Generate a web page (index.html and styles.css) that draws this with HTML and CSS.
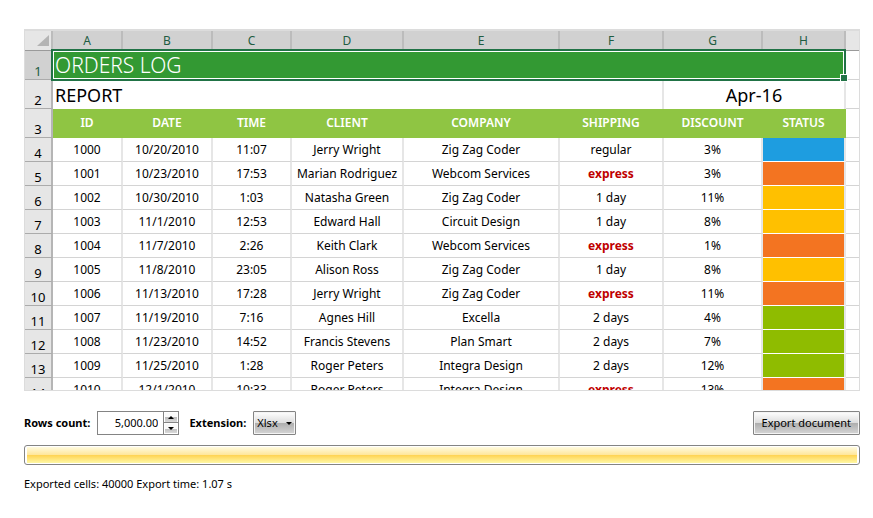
FILE: index.html
```html
<!DOCTYPE html>
<html lang="en">
<head>
<meta charset="utf-8">
<title>Orders log export</title>
<link rel="stylesheet" href="styles.css">
</head>
<body>
<main class="page">
  <div class="sheet">
    <table class="grid">
      <colgroup>
        <col class="w-num"><col class="w-a"><col class="w-b"><col class="w-c"><col class="w-d"><col class="w-e"><col class="w-f"><col class="w-g"><col class="w-h"><col class="w-i">
      </colgroup>
      <thead>
        <tr class="letters">
          <th class="corner"><svg width="12" height="11" viewBox="0 0 12 11" aria-hidden="true"><path d="M12 0V11H0Z" fill="#b4b4b4"/></svg></th>
          <th>A</th><th>B</th><th>C</th><th>D</th><th>E</th><th>F</th><th>G</th><th>H</th><th class="rest"></th>
        </tr>
      </thead>
      <tbody>
        <tr class="tall"><th class="num active">1</th><td class="title" colspan="8"><div class="selection">ORDERS LOG</div></td><td></td></tr>
        <tr class="tall"><th class="num">2</th><td class="report" colspan="6">REPORT</td><td class="month" colspan="2">Apr-16</td><td></td></tr>
        <tr class="tall names"><th class="num">3</th><td>ID</td><td>DATE</td><td>TIME</td><td>CLIENT</td><td>COMPANY</td><td>SHIPPING</td><td>DISCOUNT</td><td>STATUS</td><td class="rest"></td></tr>
        <tr><th class="num">4</th><td>1000</td><td>10/20/2010</td><td>11:07</td><td>Jerry Wright</td><td>Zig Zag Coder</td><td>regular</td><td>3%</td><td class="status blue"></td><td></td></tr>
        <tr><th class="num">5</th><td>1001</td><td>10/23/2010</td><td>17:53</td><td>Marian Rodriguez</td><td>Webcom Services</td><td class="express">express</td><td>3%</td><td class="status orange"></td><td></td></tr>
        <tr><th class="num">6</th><td>1002</td><td>10/30/2010</td><td>1:03</td><td>Natasha Green</td><td>Zig Zag Coder</td><td>1 day</td><td>11%</td><td class="status yellow"></td><td></td></tr>
        <tr><th class="num">7</th><td>1003</td><td>11/1/2010</td><td>12:53</td><td>Edward Hall</td><td>Circuit Design</td><td>1 day</td><td>8%</td><td class="status yellow"></td><td></td></tr>
        <tr><th class="num">8</th><td>1004</td><td>11/7/2010</td><td>2:26</td><td>Keith Clark</td><td>Webcom Services</td><td class="express">express</td><td>1%</td><td class="status orange"></td><td></td></tr>
        <tr><th class="num">9</th><td>1005</td><td>11/8/2010</td><td>23:05</td><td>Alison Ross</td><td>Zig Zag Coder</td><td>1 day</td><td>8%</td><td class="status yellow"></td><td></td></tr>
        <tr><th class="num">10</th><td>1006</td><td>11/13/2010</td><td>17:28</td><td>Jerry Wright</td><td>Zig Zag Coder</td><td class="express">express</td><td>11%</td><td class="status orange"></td><td></td></tr>
        <tr><th class="num">11</th><td>1007</td><td>11/19/2010</td><td>7:16</td><td>Agnes Hill</td><td>Excella</td><td>2 days</td><td>4%</td><td class="status green"></td><td></td></tr>
        <tr><th class="num">12</th><td>1008</td><td>11/23/2010</td><td>14:52</td><td>Francis Stevens</td><td>Plan Smart</td><td>2 days</td><td>7%</td><td class="status green"></td><td></td></tr>
        <tr><th class="num">13</th><td>1009</td><td>11/25/2010</td><td>1:28</td><td>Roger Peters</td><td>Integra Design</td><td>2 days</td><td>12%</td><td class="status green"></td><td></td></tr>
        <tr><th class="num">14</th><td>1010</td><td>12/1/2010</td><td>10:33</td><td>Roger Peters</td><td>Integra Design</td><td class="express">express</td><td>13%</td><td class="status orange"></td><td></td></tr>
      </tbody>
    </table>
  </div>

  <form class="controls">
    <label for="rows">Rows count:</label>
    <div class="spinner">
      <input id="rows" type="text" inputmode="decimal" value="5,000.00">
      <div class="steps">
        <button type="button" aria-label="Increase"><svg width="6" height="3" viewBox="0 0 6 3"><path d="M0 3L3 0L6 3Z"/></svg></button>
        <button type="button" aria-label="Decrease"><svg width="6" height="3" viewBox="0 0 6 3"><path d="M0 0L3 3L6 0Z"/></svg></button>
      </div>
    </div>
    <label for="ext">Extension:</label>
    <div class="picker">
      <select id="ext"><option>Xlsx</option></select>
      <svg class="arrow" width="6" height="3" viewBox="0 0 6 3" aria-hidden="true"><path d="M0 0L3 3L6 0Z"/></svg>
    </div>
    <button class="export" type="button">Export document</button>
  </form>

  <progress class="bar" max="100" value="100" aria-label="Export progress"></progress>
  <p class="result">Exported cells: 40000 Export time: 1.07 s</p>
</main>
</body>
</html>
```
FILE: styles.css
```css
* { box-sizing: border-box; }

body {
  margin: 0;
  background: #fff;
  color: #000;
  font: 11px/16px "Noto Sans", "Open Sans", sans-serif;
}

.page { padding: 29px 13px 24px 24px; }

/* Spreadsheet */
.sheet {
  height: 362px;
  overflow: hidden;
  border: 1px solid #dcdcdc;
  border-top: 2px solid #dcdcdc;
}

.grid {
  width: 100%;
  table-layout: fixed;
  border-collapse: separate;
  border-spacing: 0;
}

.w-num { width: 28px; }
.w-a { width: 70px; }
.w-b { width: 90px; }
.w-c { width: 79px; }
.w-d { width: 112px; }
.w-e { width: 156px; }
.w-f { width: 104px; }
.w-g { width: 99px; }
.w-h { width: 83px; }
.w-i { width: 13px; }

.grid th,
.grid td {
  height: 24px;
  padding: 0;
  border-right: 2px solid #e6e6e6;
  border-bottom: 1px solid #d4d4d4;
  font-size: 12px;
  line-height: 16px;
  text-align: center;
  white-space: nowrap;
}

.grid td:last-child { border-right: 0; }

.grid .letters th {
  height: 20px;
  background: #d1d1d1;
  border-right-color: #bcbcbc;
  border-bottom-color: #9a9a9a;
  color: #215c41;
  font-weight: 400;
}

.grid .letters .corner {
  background: #e6e6e6;
  padding-right: 2px;
  text-align: right;
}

.corner svg { display: block; margin-left: auto; }
.grid .letters .rest { background: #e6e6e6; border-right: 0; }

.grid .num {
  background: #e6e6e6;
  border-right-color: #b5b5b5;
  border-bottom-color: #ababab;
  font-size: 13px;
  font-weight: 400;
  vertical-align: bottom;
}

.grid .active { background: #d1d1d1; color: #215c41; }

.grid .tall th,
.grid .tall td { height: 29px; }

.grid .title {
  background: #339933;
  border: 0;
  color: #fff;
  font-size: 21px;
  font-weight: 300;
  text-align: left;
}

.selection {
  position: relative;
  padding-left: 2px;
  line-height: 29px;
}

.selection::before {
  content: "";
  position: absolute;
  inset: -2px 0 -1px -2px;
  border: 2px solid #217346;
  box-shadow: inset 0 0 0 1px #fff;
}

.selection::after {
  content: "";
  position: absolute;
  right: -2px;
  bottom: -2px;
  width: 6px;
  height: 6px;
  background: #217346;
  border: 1px solid #fff;
}

.grid .report,
.grid .month {
  border-bottom: 0;
  font-size: 18px;
  line-height: 24px;
}

.grid .report { padding-left: 2px; text-align: left; }

.grid .names td {
  background: #8fc543;
  border-color: #8fc543;
  color: #fff;
  font-weight: 600;
}

.grid .names .rest { background: #fff; border-color: #d4d4d4; }

.grid .express { color: #c00000; font-weight: 700; }

.grid .status { border-bottom-color: #fff; }
.blue { background: #1e9de0; }
.orange { background: #f37421; }
.yellow { background: #ffc000; }
.green { background: #8fbc00; }

/* Export controls */
.controls {
  display: flex;
  align-items: center;
  margin-top: 20px;
}

.controls label { margin-right: 7px; font-weight: 700; }

.controls input,
.controls select,
.controls button {
  margin: 0;
  color: #000;
  font: inherit;
}

.spinner {
  display: flex;
  width: 82px;
  height: 24px;
  margin-right: 10px;
  border: 1px solid #848484;
}

.spinner input {
  flex: 1;
  min-width: 0;
  padding: 0 5px;
  border: 0;
  text-align: right;
}

.steps {
  display: flex;
  flex-direction: column;
  width: 15px;
  border-left: 1px solid #848484;
}

.steps button {
  display: flex;
  flex: 1;
  align-items: center;
  justify-content: center;
  padding: 0;
  border: 1px solid #fff;
  background: linear-gradient(#fafafa 0 50%, #bdbdbd 50%, #dadada);
}

.steps button + button { box-shadow: 0 -1px #848484; }

.picker { position: relative; }

.picker select {
  display: block;
  width: 43px;
  height: 24px;
  padding: 0 0 0 3px;
  appearance: none;
}

.picker select,
.controls .export {
  border: 1px solid #848484;
  border-radius: 1px;
  background: linear-gradient(#fff, #dcdcdc 50%, #adadad 50%, #d6d6d6);
  box-shadow: inset 0 0 0 1px #f4f4f4;
}

.arrow {
  position: absolute;
  top: 11px;
  right: 4px;
  pointer-events: none;
}

.controls .export {
  height: 24px;
  margin-left: auto;
  padding: 0 8px;
}

.bar {
  display: block;
  width: 100%;
  height: 20px;
  margin-top: 10px;
  padding: 1px 2px;
  appearance: none;
  border: 1px solid #848484;
  border-radius: 3px;
  background: #fff;
}

.bar::-webkit-progress-bar { background: #fff; }

.bar::-webkit-progress-value {
  background: linear-gradient(#fffbe0, #ffe79c 48%, #ffd250 50%, #fff8a5);
}

.result { margin: 11px 0 0; }
```
